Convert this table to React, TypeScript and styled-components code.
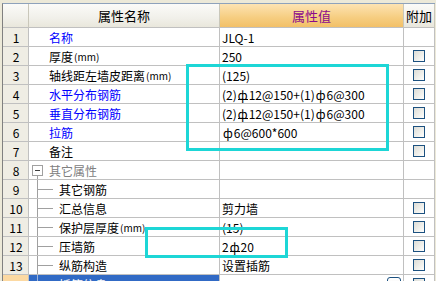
import React from "react";
import styled, { createGlobalStyle } from "styled-components";

const GlobalStyle = createGlobalStyle`
  html, body {
    margin: 0;
    padding: 0;
    background: #ece9d8;
    overflow: hidden;
  }
  body {
    font-family: "Noto Sans CJK SC", "Liberation Sans", sans-serif;
    font-size: 12px;
    color: #000;
  }
`;

const Page = styled.div`
  position: relative;
  width: 436px;
  height: 281px;
  overflow: hidden;
`;

const Frame = styled.div`
  margin: 3px 0 0 2px;
  border-left: 1px solid #808080;
  border-top: 1px solid #8ea2bb;
  background: #fff;
  width: 432px;
`;

const COLS = "26px 191px 184px 31px";

const HeaderRow = styled.div`
  display: grid;
  grid-template-columns: ${COLS};
  height: 24px;
`;

const HeaderCell = styled.div<{ $accent?: boolean }>`
  box-sizing: border-box;
  border-right: 1px solid #c9c7ba;
  border-bottom: 1px solid #c0c0c0;
  display: flex;
  align-items: center;
  justify-content: center;
  font-size: 13px;
  color: ${(p) => (p.$accent ? "#8b0a8b" : "#000")};
  background: ${(p) =>
    p.$accent
      ? "linear-gradient(#fde3b2, #f6cd80 60%, #f2c067)"
      : "linear-gradient(#fbfbf8, #f1f0ea 60%, #e9e7dc)"};
`;

const Row = styled.div`
  display: grid;
  grid-template-columns: ${COLS};
  height: 19px;
`;

const Cell = styled.div`
  box-sizing: border-box;
  border-right: 1px solid #c0c0c0;
  border-bottom: 1px solid #c0c0c0;
  display: flex;
  align-items: center;
  white-space: nowrap;
  overflow: hidden;
  position: relative;
`;

const NumCell = styled(Cell)<{ $selected?: boolean }>`
  justify-content: center;
  padding-left: 1px;
  background: ${(p) => (p.$selected ? "#fcd9a2" : "#efede4")};
`;

const NameCell = styled(Cell)<{
  $blue?: boolean;
  $kind: "plain" | "group" | "child";
  $selected?: boolean;
}>`
  padding-left: ${(p) => (p.$kind === "child" ? 30 : p.$kind === "group" ? 3 : 20)}px;
  color: ${(p) =>
    p.$selected ? "#fff" : p.$blue ? "#0000ff" : p.$kind === "group" ? "#808080" : "#000"};
  background: ${(p) => (p.$selected ? "#316ac5" : "#fff")};

  ${(p) =>
    p.$kind === "child" &&
    `
    &::before {
      content: "";
      position: absolute;
      left: 8px;
      top: 0;
      bottom: 0;
      border-left: 1px solid ${p.$selected ? "#9db4dc" : "#a0a0a0"};
    }
    &::after {
      content: "";
      position: absolute;
      left: 9px;
      top: 9px;
      width: 15px;
      border-top: 1px solid ${p.$selected ? "#9db4dc" : "#a0a0a0"};
    }
  `}

  ${(p) =>
    p.$kind === "group" &&
    `
    &::after {
      content: "";
      position: absolute;
      left: 8px;
      top: 15px;
      bottom: 0;
      border-left: 1px solid #a0a0a0;
    }
  `}
`;

const ToggleBox = styled.span`
  box-sizing: border-box;
  width: 11px;
  height: 11px;
  border: 1px solid #a0a0a0;
  background: #fff;
  margin-right: 6px;
  display: inline-flex;
  align-items: center;
  justify-content: center;

  &::before {
    content: "";
    width: 5px;
    border-top: 1px solid #404040;
  }
`;

const Unit = styled.span`
  font-size: 10px;
  margin-left: 1px;
`;

const ValueCell = styled(Cell)`
  padding-left: 2px;
  font-family: "Noto Sans CJK SC", "DejaVu Sans", sans-serif;
`;

const AttachCell = styled(Cell)`
  justify-content: center;
`;

const CheckBox = styled.span`
  box-sizing: border-box;
  width: 12px;
  height: 12px;
  border: 1px solid #1c5180;
  background: linear-gradient(135deg, #dcdcd6, #f4f4f0 70%, #fff);
`;

const EditButton = styled.span`
  position: absolute;
  right: 2px;
  top: 2px;
  width: 14px;
  height: 18px;
  box-sizing: border-box;
  border: 1px solid #1c5180;
  border-radius: 3px;
  background: linear-gradient(#fff, #ecebe6);
`;

// HPB300 bar mark
const PlainBar = styled.span`
  margin: 0 1px;
`;

// HRB400 bar mark: round bar with a base stroke
const RibBar = styled.span`
  position: relative;
  display: inline-block;
  margin: 0 1px;

  &::after {
    content: "";
    position: absolute;
    left: 0;
    right: 0;
    bottom: 3px;
    border-top: 1px solid #000;
  }
`;

const Marker = styled.div<{ $l: number; $t: number; $w: number; $h: number }>`
  position: absolute;
  left: ${(p) => p.$l}px;
  top: ${(p) => p.$t}px;
  width: ${(p) => p.$w}px;
  height: ${(p) => p.$h}px;
  box-sizing: border-box;
  border: 3px solid #1dd6d6;
  pointer-events: none;
`;

type PropRow = {
  name: string;
  unit?: string;
  value?: string;
  blue?: boolean;
  kind?: "plain" | "group" | "child";
  check?: boolean;
  selected?: boolean;
};

const rows: PropRow[] = [
  { name: "名称", blue: true, value: "JLQ-1" },
  { name: "厚度", unit: "(mm)", value: "250", check: true },
  { name: "轴线距左墙皮距离", unit: "(mm)", value: "(125)", check: true },
  { name: "水平分布钢筋", blue: true, value: "(2)#12@150+(1)$6@300", check: true },
  { name: "垂直分布钢筋", blue: true, value: "(2)#12@150+(1)$6@300", check: true },
  { name: "拉筋", blue: true, value: "$6@600*600", check: true },
  { name: "备注", check: true },
  { name: "其它属性", kind: "group" },
  { name: "其它钢筋", kind: "child" },
  { name: "汇总信息", kind: "child", value: "剪力墙", check: true },
  { name: "保护层厚度", unit: "(mm)", kind: "child", value: "(15)", check: true },
  { name: "压墙筋", kind: "child", value: "2#20", check: true },
  { name: "纵筋构造", kind: "child", value: "设置插筋", check: true },
  { name: "插筋信息", kind: "child", check: true, selected: true },
];

// '#' marks an HRB400 bar, '$' an HPB300 bar
function BarText({ text }: { text: string }) {
  const parts = text.split(/([#$])/);
  return (
    <span>
      {parts.map((p, i) =>
        p === "#" ? (
          <RibBar key={i}>ф</RibBar>
        ) : p === "$" ? (
          <PlainBar key={i}>ф</PlainBar>
        ) : (
          <React.Fragment key={i}>{p}</React.Fragment>
        )
      )}
    </span>
  );
}

export default function App() {
  return (
    <Page>
      <GlobalStyle />
      <Frame>
        <HeaderRow>
          <HeaderCell />
          <HeaderCell>属性名称</HeaderCell>
          <HeaderCell $accent>属性值</HeaderCell>
          <HeaderCell>附加</HeaderCell>
        </HeaderRow>
        {rows.map((r, i) => {
          const kind = r.kind || "plain";
          return (
            <Row key={i}>
              <NumCell $selected={r.selected}>{i + 1}</NumCell>
              <NameCell $kind={kind} $blue={r.blue} $selected={r.selected}>
                {kind === "group" && <ToggleBox />}
                {r.name}
                {r.unit && <Unit>{r.unit}</Unit>}
              </NameCell>
              <ValueCell>
                {r.value && <BarText text={r.value} />}
                {r.selected && <EditButton />}
              </ValueCell>
              <AttachCell>{r.check && <CheckBox />}</AttachCell>
            </Row>
          );
        })}
      </Frame>
      <Marker $l={186} $t={64} $w={203} $h={87} />
      <Marker $l={145} $t={227} $w={143} $h={31} />
    </Page>
  );
}
